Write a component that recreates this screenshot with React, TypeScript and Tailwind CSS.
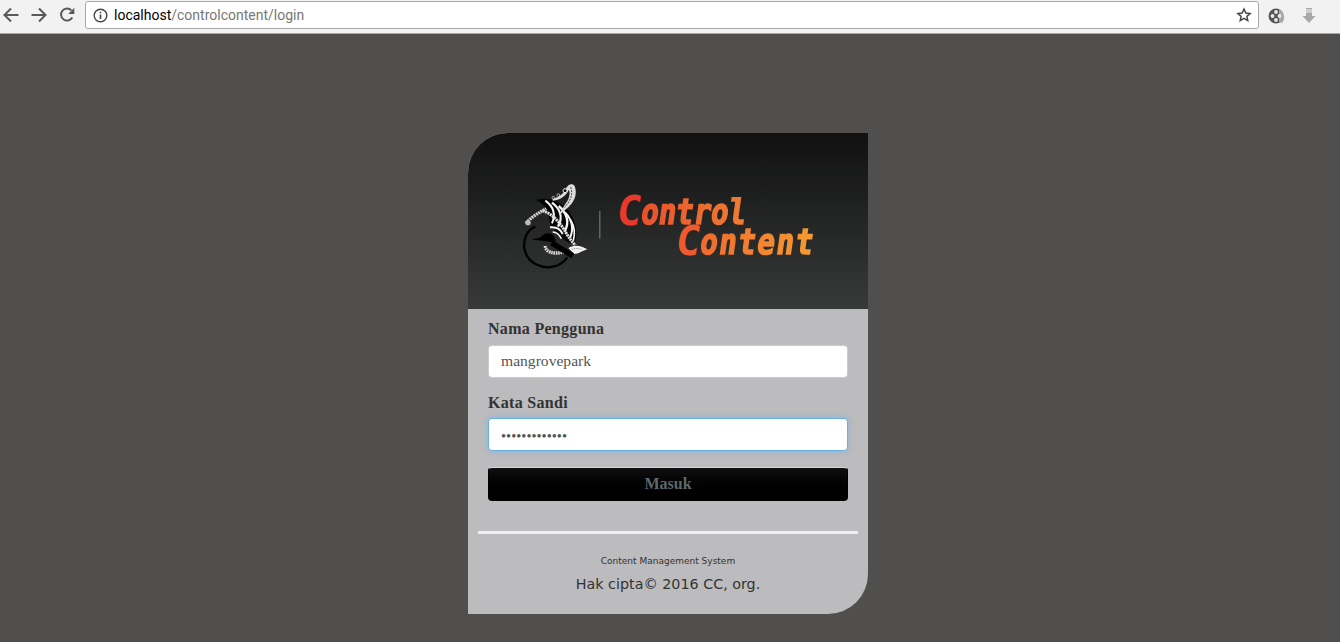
import React from "react";

function Bird() {
  return (
    <svg width="120" height="110" viewBox="0 0 360 330" className="shrink-0">
      {/* ring */}
      <path d="M106 170 C78 180 68 215 74 240 C84 280 125 298 160 290 C178 286 192 276 202 262" fill="none" stroke="#000" strokeWidth="7" />
      {/* left plume */}
      <path d="M78 160 C95 140 118 128 146 112" fill="none" stroke="#d4d4d4" strokeWidth="10" strokeDasharray="6 2" />
      <path d="M84 158 C100 144 120 132 142 120" fill="none" stroke="#222" strokeWidth="2" strokeDasharray="4 4" />
      <circle cx="84" cy="158" r="8" fill="#bbb" />
      {/* black feather */}
      <path d="M108 90 C140 80 178 92 202 118 C226 146 236 190 224 220 C205 222 188 208 176 192 C162 176 148 168 148 150 C148 125 135 102 108 90Z" fill="#050505" />
      {/* feather ribs */}
      <path d="M136 92 C158 108 168 132 156 160" fill="none" stroke="#f4f4f4" strokeWidth="6" />
      <path d="M156 98 C180 116 190 142 174 170" fill="none" stroke="#f4f4f4" strokeWidth="7" />
      <path d="M176 108 C200 128 210 156 194 184" fill="none" stroke="#f4f4f4" strokeWidth="7" />
      <path d="M196 128 C216 150 222 176 210 204" fill="none" stroke="#f4f4f4" strokeWidth="6" />
      <path d="M212 150 C224 170 226 190 220 212" fill="none" stroke="#f4f4f4" strokeWidth="5" />
      <path d="M150 172 C170 170 182 178 188 192" fill="none" stroke="#f4f4f4" strokeWidth="6" />
      <path d="M158 186 C170 186 178 194 184 206" fill="none" stroke="#f4f4f4" strokeWidth="5" />
      {/* diagonal mottled band */}
      <path d="M128 122 C160 132 185 165 198 188 C208 205 216 215 226 226" fill="none" stroke="#e0e0e0" strokeWidth="9" strokeDasharray="6 2" />
      {/* top plume */}
      <path d="M158 86 C178 82 190 72 198 55 C204 42 218 38 224 48 C232 70 226 92 205 112 C195 120 186 128 178 136 C182 120 194 106 204 90 C210 76 210 64 206 60 C200 76 182 90 158 92Z" fill="#dcdcdc" />
      <path d="M212 52 C220 72 212 92 194 112" fill="none" stroke="#333" strokeWidth="3" strokeDasharray="5 4" />
      <circle cx="195" cy="62" r="6" fill="#111" stroke="#e8e8e8" strokeWidth="3" />
      <circle cx="175" cy="75" r="4" fill="#111" stroke="#e0e0e0" strokeWidth="2" />
      <circle cx="160" cy="83" r="4" fill="#222" stroke="#e8e8e8" strokeWidth="2" />
      {/* lower speckle */}
      <path d="M136 228 C136 246 160 254 192 246" fill="none" stroke="#d8d8d8" strokeWidth="10" strokeDasharray="5 2" />
      {/* head */}
      <path d="M94 209 L122 202 C132 188 152 186 162 198 L170 224 L150 216 C135 212 112 210 94 209Z" fill="#000" />
      {/* tail */}
      <path d="M205 234 C225 222 245 228 262 238 C245 244 235 252 222 252 Z" fill="#f0f0f0" />
      <path d="M215 238 C228 234 238 236 246 238" fill="none" stroke="#555" strokeWidth="2" strokeDasharray="3 3" />
      {/* bar */}
      <path d="M160 212 L222 250 L215 265 L150 226Z" fill="#000" />
      {/* divider */}
      <path d="M299.500 123 V206" stroke="#7c8580" strokeWidth="3" />
    </svg>
  );
}

function Wordmark({ first, rest, capColor, restClass }: { first: string; rest: string; capColor: string; restClass: string }) {
  return (
    <div className="flex h-[30px] -skew-x-[8deg] items-end font-['DejaVu_Sans_Mono',monospace] font-bold">
      <span className={"block h-[30px] text-[41px] leading-[30px] " + capColor}>{first}</span>
      <span className={"block h-[24px] origin-bottom scale-y-[1.22] bg-clip-text text-[29px] leading-[24px] text-transparent [-webkit-text-stroke:1.400px_transparent] " + restClass}>{rest}</span>
    </div>
  );
}

export default function App() {
  return (
    <div className="h-[642px] w-[1340px] overflow-hidden bg-[#504f4d]">
      <div className="flex h-[34px] items-start border-b border-[#a8a8a8] bg-[#f2f2f2] pt-[1px]">
        <div className="flex h-[28px] w-[85px] shrink-0 items-center gap-[12px] pl-[3px]">
          <svg width="16" height="16" viewBox="0 0 16 16" fill="none" stroke="#5a5a5a" strokeWidth="2">
            <path d="M15.500 8H1.800M8 1.500L1.500 8 8 14.500" />
          </svg>
          <svg width="16" height="16" viewBox="0 0 16 16" fill="none" stroke="#5a5a5a" strokeWidth="2">
            <path d="M.5 8h13.700M8 1.500L14.500 8 8 14.500" />
          </svg>
          <svg width="16" height="16" viewBox="0 0 16 16" fill="none">
            <path d="M13.300 10.500A6 6 0 1 1 12.400 3.400" stroke="#5a5a5a" strokeWidth="2" />
            <path d="M15.300 .8V7H9.200Z" fill="#5a5a5a" />
          </svg>
        </div>
        <div className="flex h-[28px] w-[1174px] shrink-0 items-center rounded-[3px] border border-[#a9a9a9] bg-white pl-[7px] pr-[6px] font-['Roboto',sans-serif] text-[14px]">
          <svg width="15" height="15" viewBox="0 0 15 15" fill="none" className="mr-[6px]">
            <circle cx="7.500" cy="7.500" r="6.300" stroke="#444" strokeWidth="1.400" />
            <path d="M7.500 6.500v4.500M7.500 3.800v1.500" stroke="#444" strokeWidth="1.600" />
          </svg>
          <span className="text-black">localhost</span>
          <span className="text-[#777]">/controlcontent/login</span>
          <svg width="16" height="16" viewBox="0 0 24 24" fill="none" stroke="#444" strokeWidth="2.200" className="ml-auto">
            <path d="M12 3l2.700 6 6.500.7-4.900 4.300 1.400 6.400L12 17.100l-5.700 3.300 1.400-6.400-4.900-4.300 6.500-.7z" />
          </svg>
        </div>
        <svg width="18" height="18" viewBox="0 0 18 18" className="ml-[9px] mt-[6px]">
          <circle cx="8" cy="9" r="7.500" fill="#555" />
          <path d="M11 2c5 2 7 10 3 14l-3-1z" fill="#a8a8a8" />
          <circle cx="8" cy="5" r="1.900" fill="#e8e8e8" />
          <circle cx="4.500" cy="9" r="1.900" fill="#e8e8e8" />
          <circle cx="8" cy="13" r="1.900" fill="#e8e8e8" />
          <circle cx="11.500" cy="9" r="1.900" fill="#e8e8e8" />
        </svg>
        <svg width="14" height="16" viewBox="0 0 14 16" className="ml-[16px] mt-[7px]">
          <path d="M4 0h6v1.500H4zM4 2.500h6v1H4zM4 4.500h6V8h3.500L7 15 .5 8H4z" fill="#a9a9a9" />
        </svg>
      </div>

      <div className="ml-[468px] mt-[99px] w-[400px] overflow-hidden rounded-tl-[40px] rounded-br-[40px] bg-[#bcbbbd]">
        <div className="flex h-[176px] items-start bg-gradient-to-b from-[#111111] to-[#383a3a] pl-[32px] pt-[37px]">
          <Bird />
          <div className="ml-[-3px] mt-[26px] flex flex-col">
            <Wordmark first="C" rest="ontrol" capColor="text-[#e8392c]" restClass="bg-gradient-to-r from-[#e9502e] to-[#ef7d30]" />
            <div className="ml-[59px]">
              <Wordmark first="C" rest="ontent" capColor="text-[#ee5a2e]" restClass="bg-gradient-to-r from-[#ef6a2e] to-[#f49c32] tracking-[1.600px]" />
            </div>
          </div>
        </div>

        <div className="px-[20px] pt-[11px] font-['Liberation_Serif',serif]">
          <label className="block text-[16px] font-bold leading-[18px] tracking-[0.300px] text-[#333]">Nama Pengguna</label>
          <input readOnly value="mangrovepark" className="mt-[7px] block h-[33px] w-[360px] rounded-[4px] border border-[#cccccc] bg-white px-[12px] pb-[2px] text-[15.600px] text-[#555] outline-none" />
          <label className="mt-[16px] block text-[16px] font-bold leading-[18px] tracking-[0.300px] text-[#333]">Kata Sandi</label>
          <input readOnly type="password" value="mangrovepark1" className="mt-[6px] block h-[33px] w-[360px] rounded-[4px] border border-[#66afe9] bg-white px-[12px] pt-[4px] text-[14.500px] text-[#555] shadow-[0_0_6px_rgba(102,175,233,0.6)] outline-none" />
          <button className="mt-[16px] block h-[34px] w-[360px] rounded-[4px] border border-black border-t-[#d5d5d5] bg-gradient-to-b from-[#111111] to-[#000000] text-[16px] font-bold text-[#5d686b]">Masuk</button>
        </div>

        <div className="mx-[10px] mt-[30px] h-[3px] bg-[#eeeeee]" />
        <div className="flex h-[80px] flex-col items-center pt-[20px] font-['DejaVu_Sans',sans-serif] text-[#333]">
          <p className="text-[9px] leading-[14px]">Content Management System</p>
          <p className="mt-[6px] text-[14.300px] leading-[20px]">Hak cipta© 2016 CC, org.</p>
        </div>
      </div>
    </div>
  );
}
